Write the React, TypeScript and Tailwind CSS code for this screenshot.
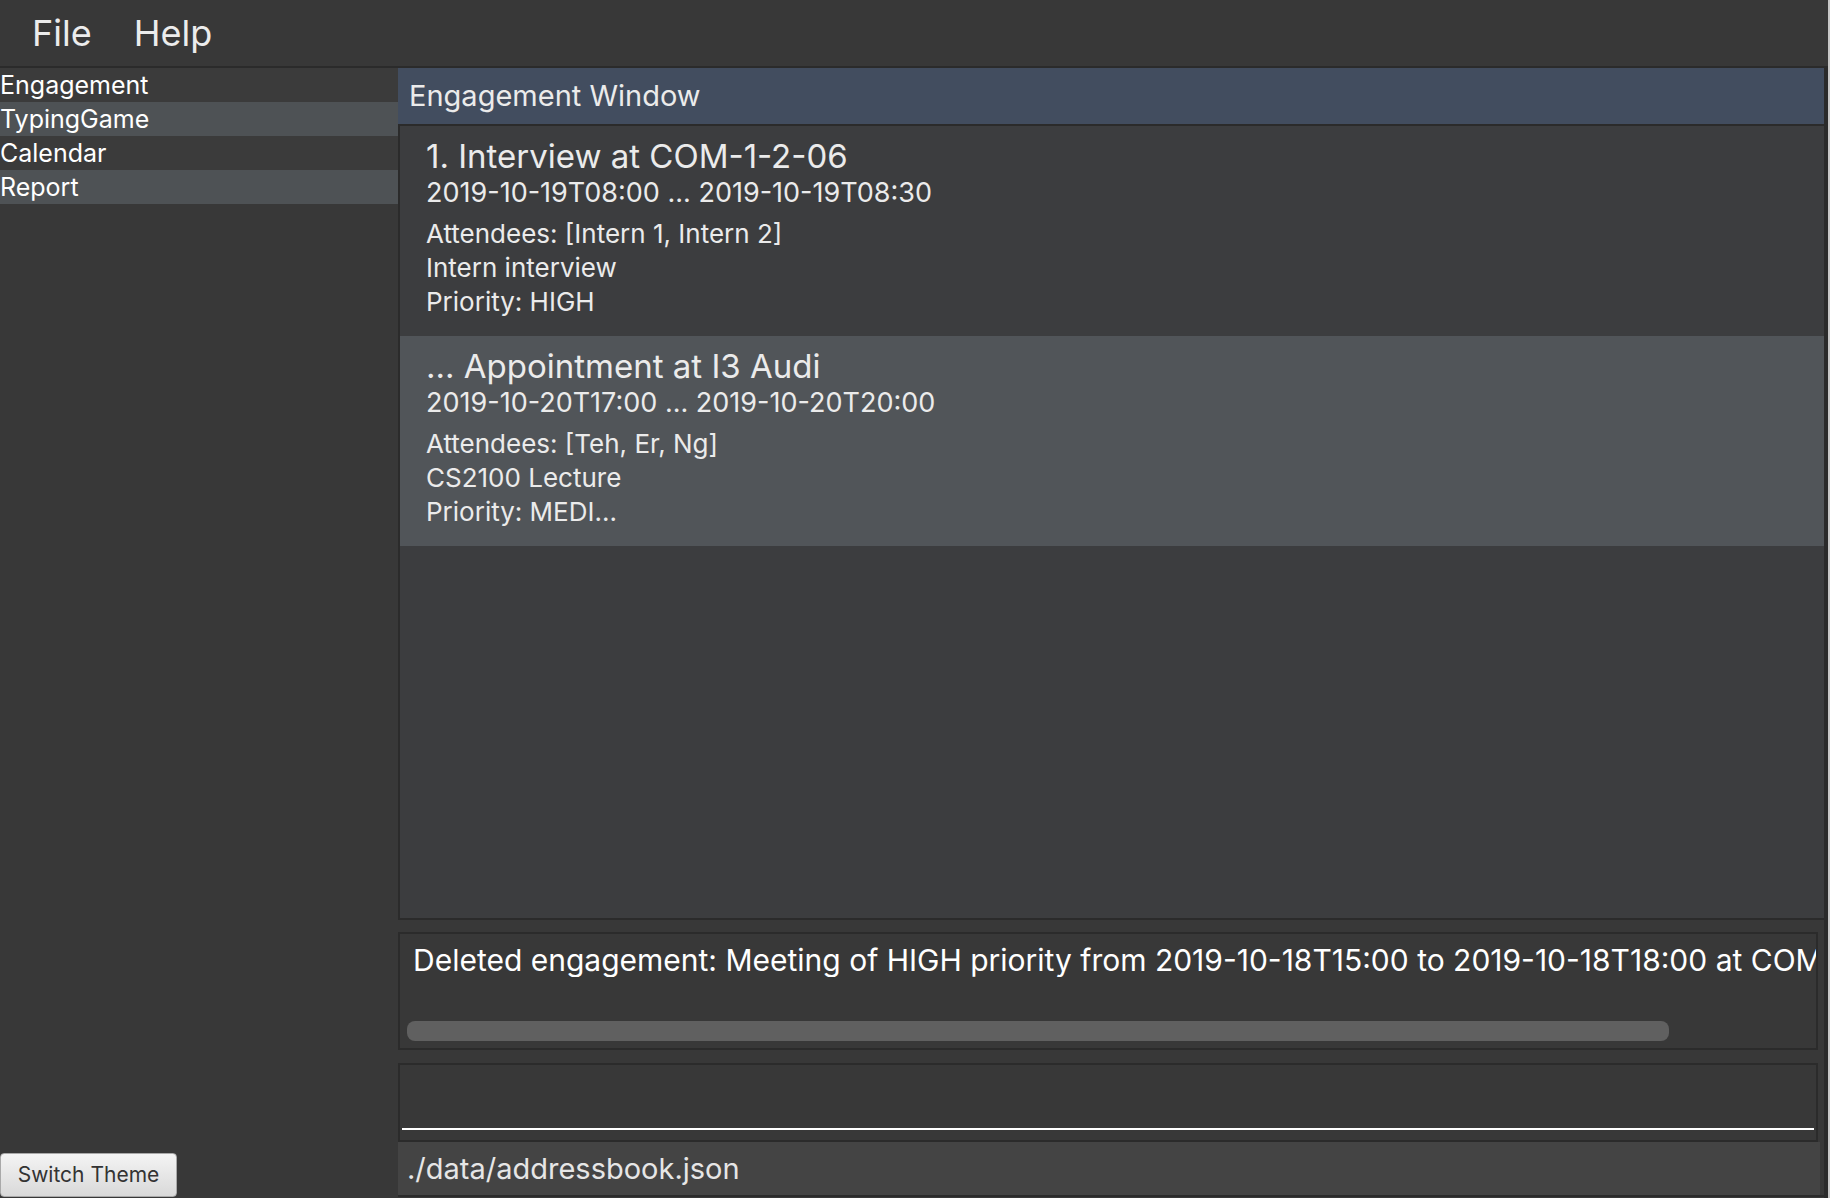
import React from 'react';

const font = { fontFamily: 'Inter, "Noto Sans", sans-serif' };

type Engagement = {
  title: string;
  time: string;
  attendees: string;
  description: string;
  priority: string;
};

const engagements: Engagement[] = [
  {
    title: '1. Interview at COM-1-2-06',
    time: '2019-10-19T08:00 ... 2019-10-19T08:30',
    attendees: 'Attendees: [Intern 1, Intern 2]',
    description: 'Intern interview',
    priority: 'Priority: HIGH',
  },
  {
    title: '... Appointment at I3 Audi',
    time: '2019-10-20T17:00 ... 2019-10-20T20:00',
    attendees: 'Attendees: [Teh, Er, Ng]',
    description: 'CS2100 Lecture',
    priority: 'Priority: MEDI...',
  },
];

const tabs = ['Engagement', 'TypingGame', 'Calendar', 'Report'];

function EngagementCard({ item, index }: { item: Engagement; index: number }) {
  return (
    <div
      className={`h-[210px] pl-[26px] pt-[12px] text-[#ebebeb] ${
        index % 2 === 1 ? 'bg-[#515559]' : 'bg-[#3c3d3f]'
      }`}
    >
      <div className="text-[33px] leading-[36px]">{item.title}</div>
      <div className="mt-[2px] text-[27px] leading-[34px]">{item.time}</div>
      <div className="mt-[7px] text-[26px] leading-[34px]">
        <div>{item.attendees}</div>
        <div>{item.description}</div>
        <div>{item.priority}</div>
      </div>
    </div>
  );
}

export default function App() {
  return (
    <div
      className="flex h-[1198px] w-[1830px] flex-col overflow-hidden border-r-2 border-[#c8c8c8] bg-[#383838]"
      style={font}
    >
      <div className="flex h-[68px] shrink-0 items-center gap-[42px] border-b-2 border-[#2b2b2b] pl-[32px] text-[36px] text-[#ececec]">
        <span>File</span>
        <span>Help</span>
      </div>

      <div className="flex min-h-0 flex-1">
        <div className="flex w-[398px] shrink-0 flex-col justify-between">
          <div>
            {tabs.map((tab, i) => (
              <div
                key={tab}
                className={`h-[34px] text-[25px] leading-[34px] text-white ${
                  i % 2 === 1 ? 'bg-[#4e5255]' : 'bg-[#3b3b3b]'
                }`}
              >
                {tab}
              </div>
            ))}
          </div>
          <button className="mb-[1px] h-[44px] w-[177px] rounded-[4px] border border-[#a9a9a9] bg-gradient-to-b from-[#f4f4f4] to-[#d9d9d9] text-[21px] text-[#333]">
            Switch Theme
          </button>
        </div>

        <div className="flex min-w-0 flex-1 flex-col border-r-4 border-[#2b2b2b]">
          <div className="flex h-[58px] shrink-0 items-center border-b-2 border-[#2b2b2b] bg-[#424d5f] pl-[11px] text-[29px] text-[#ebebeb]">
            Engagement Window
          </div>
          <div className="h-[794px] shrink-0 border-b-2 border-l-2 border-[#2b2b2b] bg-[#3c3d3f]">
            {engagements.map((e, i) => (
              <EngagementCard key={e.title} item={e} index={i} />
            ))}
          </div>

          <div className="mt-[12px] mr-[6px] h-[118px] shrink-0 border-2 border-[#2b2b2b] bg-[#383838]">
            <div className="overflow-hidden whitespace-nowrap pl-[13px] pt-[9px] text-[30px] leading-[34px] text-white">
              Deleted engagement: Meeting of HIGH priority from 2019-10-18T15:00 to 2019-10-18T18:00 at COM-1-2-06
            </div>
            <div className="ml-[7px] mt-[44px] h-[20px] w-[1262px] rounded-[8px] bg-[#606060]" />
          </div>

          <div className="mt-[13px] mr-[6px] flex h-[79px] shrink-0 flex-col justify-end border-2 border-[#2b2b2b] bg-[#383838] px-[2px] pb-[10px]">
            <div className="h-[2px] bg-white" />
          </div>

          <div className="mr-[4px] flex h-[53px] shrink-0 items-center bg-[#444444] pl-[9px] text-[29px] text-[#e6e6e6]">
            ./data/addressbook.json
          </div>
          <div className="h-[2px] bg-[#2b2b2b]" />
        </div>
      </div>
    </div>
  );
}
